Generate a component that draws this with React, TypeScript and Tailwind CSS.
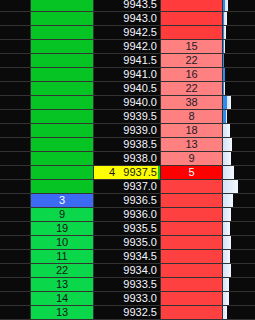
import clsx from 'clsx'

type Row = {
  price: string
  bid?: string
  bidTone: 'plain' | 'fill' | 'blue'
  ask?: string
  askTone: 'plain' | 'pink' | 'hot' | 'low'
  last?: string
  blue: number
  light: number
}

const rows: Row[] = [
  { price: '9943.5', bidTone: 'plain', askTone: 'plain', blue: 2, light: 3 },
  { price: '9943.0', bidTone: 'plain', askTone: 'plain', blue: 1, light: 3 },
  { price: '9942.5', bidTone: 'plain', askTone: 'plain', blue: 1, light: 2 },
  { price: '9942.0', bidTone: 'plain', ask: '15', askTone: 'pink', blue: 1, light: 1 },
  { price: '9941.5', bidTone: 'plain', ask: '22', askTone: 'pink', blue: 1, light: 0 },
  { price: '9941.0', bidTone: 'plain', ask: '16', askTone: 'pink', blue: 2, light: 0 },
  { price: '9940.5', bidTone: 'plain', ask: '22', askTone: 'pink', blue: 1, light: 1 },
  { price: '9940.0', bidTone: 'plain', ask: '38', askTone: 'pink', blue: 4, light: 4 },
  { price: '9939.5', bidTone: 'plain', ask: '8', askTone: 'pink', blue: 3, light: 1 },
  { price: '9939.0', bidTone: 'plain', ask: '18', askTone: 'pink', blue: 0, light: 7 },
  { price: '9938.5', bidTone: 'plain', ask: '13', askTone: 'pink', blue: 0, light: 9 },
  { price: '9938.0', bidTone: 'plain', ask: '9', askTone: 'pink', blue: 0, light: 8 },
  { price: '9937.5', bidTone: 'plain', ask: '5', askTone: 'hot', last: '4', blue: 0, light: 11 },
  { price: '9937.0', bidTone: 'plain', askTone: 'low', blue: 0, light: 15 },
  { price: '9936.5', bid: '3', bidTone: 'blue', askTone: 'low', blue: 0, light: 10 },
  { price: '9936.0', bid: '9', bidTone: 'fill', askTone: 'low', blue: 0, light: 8 },
  { price: '9935.5', bid: '19', bidTone: 'fill', askTone: 'low', blue: 0, light: 7 },
  { price: '9935.0', bid: '10', bidTone: 'fill', askTone: 'low', blue: 0, light: 8 },
  { price: '9934.5', bid: '11', bidTone: 'fill', askTone: 'low', blue: 0, light: 7 },
  { price: '9934.0', bid: '22', bidTone: 'fill', askTone: 'low', blue: 0, light: 8 },
  { price: '9933.5', bid: '13', bidTone: 'fill', askTone: 'low', blue: 0, light: 6 },
  { price: '9933.0', bid: '14', bidTone: 'fill', askTone: 'low', blue: 0, light: 6 },
  { price: '9932.5', bid: '13', bidTone: 'fill', askTone: 'low', blue: 0, light: 4 },
]

export default function App() {
  return (
    <div className="h-[320px] w-[255px] overflow-hidden bg-[#0a0a0a] font-['Liberation_Sans',Arial,sans-serif] text-[11px] leading-[13px]">
      <div className="-mt-[2px] flex flex-col">
        {rows.map((row) => (
          <div key={row.price} className="flex h-[14px] border-b border-[#333333]">
            <div className="w-[31px] shrink-0 border-r border-[#333333]" />

            <div
              className={clsx(
                'w-[63px] shrink-0 border-r border-[#333333] text-center',
                row.bidTone === 'plain' && 'bg-[#05c424]',
                row.bidTone === 'fill' && 'bg-[#0ad84a] text-[#14141c]',
                row.bidTone === 'blue' && 'bg-[#3d6af2] text-white',
              )}
            >
              {row.bid}
            </div>

            <div
              className={clsx(
                'flex w-[67px] shrink-0 items-center border-r border-[#333333]',
                row.last
                  ? 'border-l-0 bg-[#ffff00] text-[#1a1a1a] shadow-[inset_-2px_0_0_#12c81e]'
                  : 'text-[#f4f6ff]',
              )}
            >
              <span className="pl-[15px]">{row.last}</span>
              <span className="flex-1 pr-[3px] text-right">{row.price}</span>
            </div>

            <div
              className={clsx(
                'w-[62px] shrink-0 border-r border-[#333333] text-center',
                row.askTone === 'plain' && 'bg-[#ff3b3b]',
                row.askTone === 'pink' && 'bg-[#ff8080] text-[#1c1c2a]',
                row.askTone === 'hot' && 'bg-[#ff0000] text-white',
                row.askTone === 'low' && 'bg-[#ff4040]',
              )}
            >
              {row.ask}
            </div>

            <div className="flex flex-1">
              {row.blue > 0 && (
                <div className="h-full bg-[#2f8bef]" style={{ width: row.blue }} />
              )}
              {row.light > 0 && (
                <div
                  className="h-full bg-gradient-to-r from-[#d3e3f8] to-[#f3f8ff]"
                  style={{ width: row.light }}
                />
              )}
            </div>
          </div>
        ))}
      </div>
    </div>
  )
}
